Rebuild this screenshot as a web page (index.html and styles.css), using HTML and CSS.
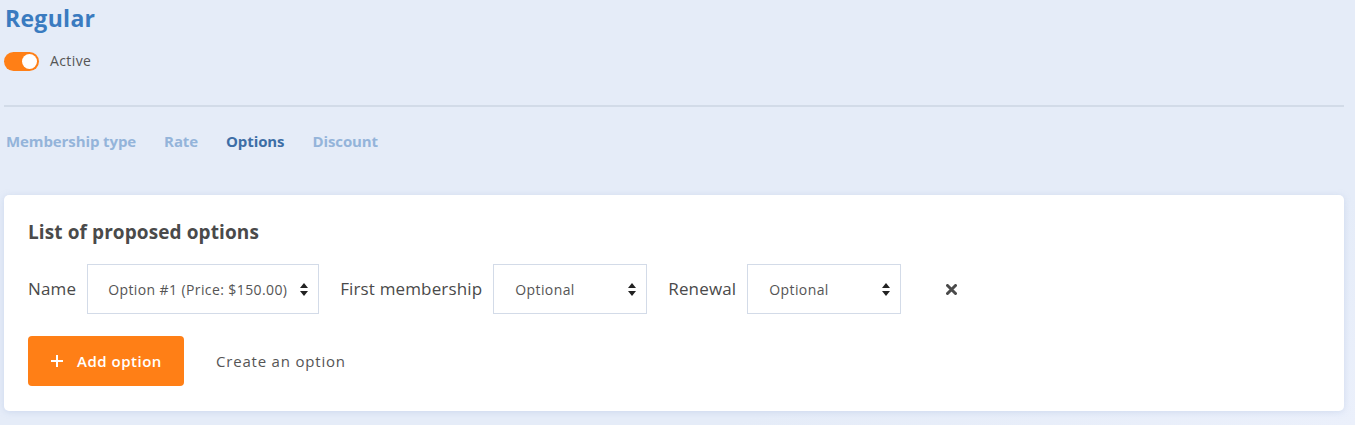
FILE: index.html
```html
<!DOCTYPE html>
<html>
<head>
<meta charset="utf-8">
<link rel="stylesheet" href="styles.css">
</head>
<body>
<div class="page">
  <h1 class="title">Regular</h1>
  <div class="status">
    <span class="toggle"><span class="knob"></span></span>
    <span class="status-label">Active</span>
  </div>
  <hr class="divider">
  <nav class="tabs">
    <span class="tab">Membership type</span>
    <span class="tab">Rate</span>
    <span class="tab active">Options</span>
    <span class="tab">Discount</span>
  </nav>
  <section class="card">
    <h2 class="card-title">List of proposed options</h2>
    <div class="row">
      <span class="label">Name</span>
      <div class="select sel-name"><span class="sel-text">Option #1 (Price: $150.00)</span><svg class="arrows" width="8" height="13" viewBox="0 0 8 13"><path d="M4 0L8 5H0z M4 13L0 8h8z" fill="#222"/></svg></div>
      <span class="label">First membership</span>
      <div class="select sel-opt"><span class="sel-text">Optional</span><svg class="arrows" width="8" height="13" viewBox="0 0 8 13"><path d="M4 0L8 5H0z M4 13L0 8h8z" fill="#222"/></svg></div>
      <span class="label">Renewal</span>
      <div class="select sel-opt"><span class="sel-text">Optional</span><svg class="arrows" width="8" height="13" viewBox="0 0 8 13"><path d="M4 0L8 5H0z M4 13L0 8h8z" fill="#222"/></svg></div>
      <svg class="remove" width="11" height="11" viewBox="0 0 11 11"><path d="M1.5 1.5L9.5 9.5M9.5 1.5L1.5 9.5" stroke="#4a4a4a" stroke-width="3" stroke-linecap="round"/></svg>
    </div>
    <div class="actions">
      <button class="btn-add"><svg width="14" height="14" viewBox="0 0 14 14"><path d="M7 1V13M1 7H13" stroke="#fff" stroke-width="2"/></svg><span>Add option</span></button>
      <span class="create">Create an option</span>
    </div>
  </section>
</div>
</body>
</html>
```
FILE: styles.css
```css
html, body {
  margin: 0;
  padding: 0;
}
body {
  background: linear-gradient(160deg, #e5ecf8 0%, #e5ecf8 75%, #ebf0fb 100%);
  font-family: "Open Sans", "Liberation Sans", sans-serif;
  color: #4a4a4a;
  height: 425px;
  overflow: hidden;
}
.page {
  width: 1340px;
  margin-left: 4px;
}
.title {
  margin: 0;
  padding-top: 4px;
  font-size: 23px;
  line-height: 28px;
  font-weight: 700;
  color: #3a7bc0;
  padding-left: 1px;
  letter-spacing: 0.3px;
}
.status {
  display: flex;
  align-items: center;
  gap: 11px;
  margin-top: 19px;
  height: 20px;
}
.toggle {
  width: 35px;
  height: 19px;
  border-radius: 10px;
  background: #ff7f16;
  display: flex;
  align-items: center;
  justify-content: flex-end;
  padding-right: 2px;
  box-sizing: border-box;
}
.knob {
  width: 15px;
  height: 15px;
  border-radius: 50%;
  background: #fff;
}
.status-label {
  font-size: 14px;
  line-height: 20px;
  color: #555;
  letter-spacing: 0.4px;
}
.divider {
  border: 0;
  height: 2px;
  background: #d2dbe8;
  margin: 34px 0 0 0;
}
.tabs {
  display: flex;
  gap: 28px;
  margin-top: 24px;
  padding-left: 2px;
  height: 20px;
  align-items: center;
}
.tab {
  font-size: 15px;
  line-height: 20px;
  font-weight: 700;
  color: #94b4da;
  letter-spacing: -0.1px;
}
.tab.active {
  color: #3d6ea6;
}
.card {
  margin-top: 44px;
  background: #fff;
  border-radius: 5px;
  box-shadow: 0 1px 6px rgba(160, 180, 220, 0.35);
  padding: 24px 24px 24px 24px;
  height: 216px;
  box-sizing: border-box;
}
.card-title {
  margin: 0;
  font-size: 19px;
  font-weight: 700;
  color: #4a4a4a;
  line-height: 26px;
  letter-spacing: 0.1px;
}
.row {
  display: flex;
  align-items: center;
  margin-top: 19px;
}
.label {
  font-size: 17px;
  line-height: 22px;
  color: #4a4a4a;
  margin-right: 11px;
  letter-spacing: 0.15px;
}
.select {
  height: 50px;
  box-sizing: border-box;
  border: 1px solid #d3dbe8;
  display: flex;
  align-items: center;
  justify-content: space-between;
  padding: 0 10px 0 20px;
  margin-right: 21px;
}
.sel-text {
  font-size: 14px;
  color: #555;
  letter-spacing: 0.4px;
}
.sel-name { width: 232px; }
.sel-opt { width: 154px; padding-left: 21px; }
.remove {
  margin-left: 24px;
}
.actions {
  display: flex;
  align-items: center;
  margin-top: 22px;
}
.btn-add {
  width: 156px;
  height: 50px;
  border: 0;
  border-radius: 4px;
  background: #ff7f16;
  color: #fff;
  font-family: inherit;
  font-size: 15px;
  font-weight: 600;
  letter-spacing: 0.5px;
  display: flex;
  align-items: center;
  justify-content: center;
  gap: 13px;
  padding: 0;
}
.create {
  margin-left: 32px;
  font-size: 15px;
  color: #555;
  letter-spacing: 0.8px;
}
```
